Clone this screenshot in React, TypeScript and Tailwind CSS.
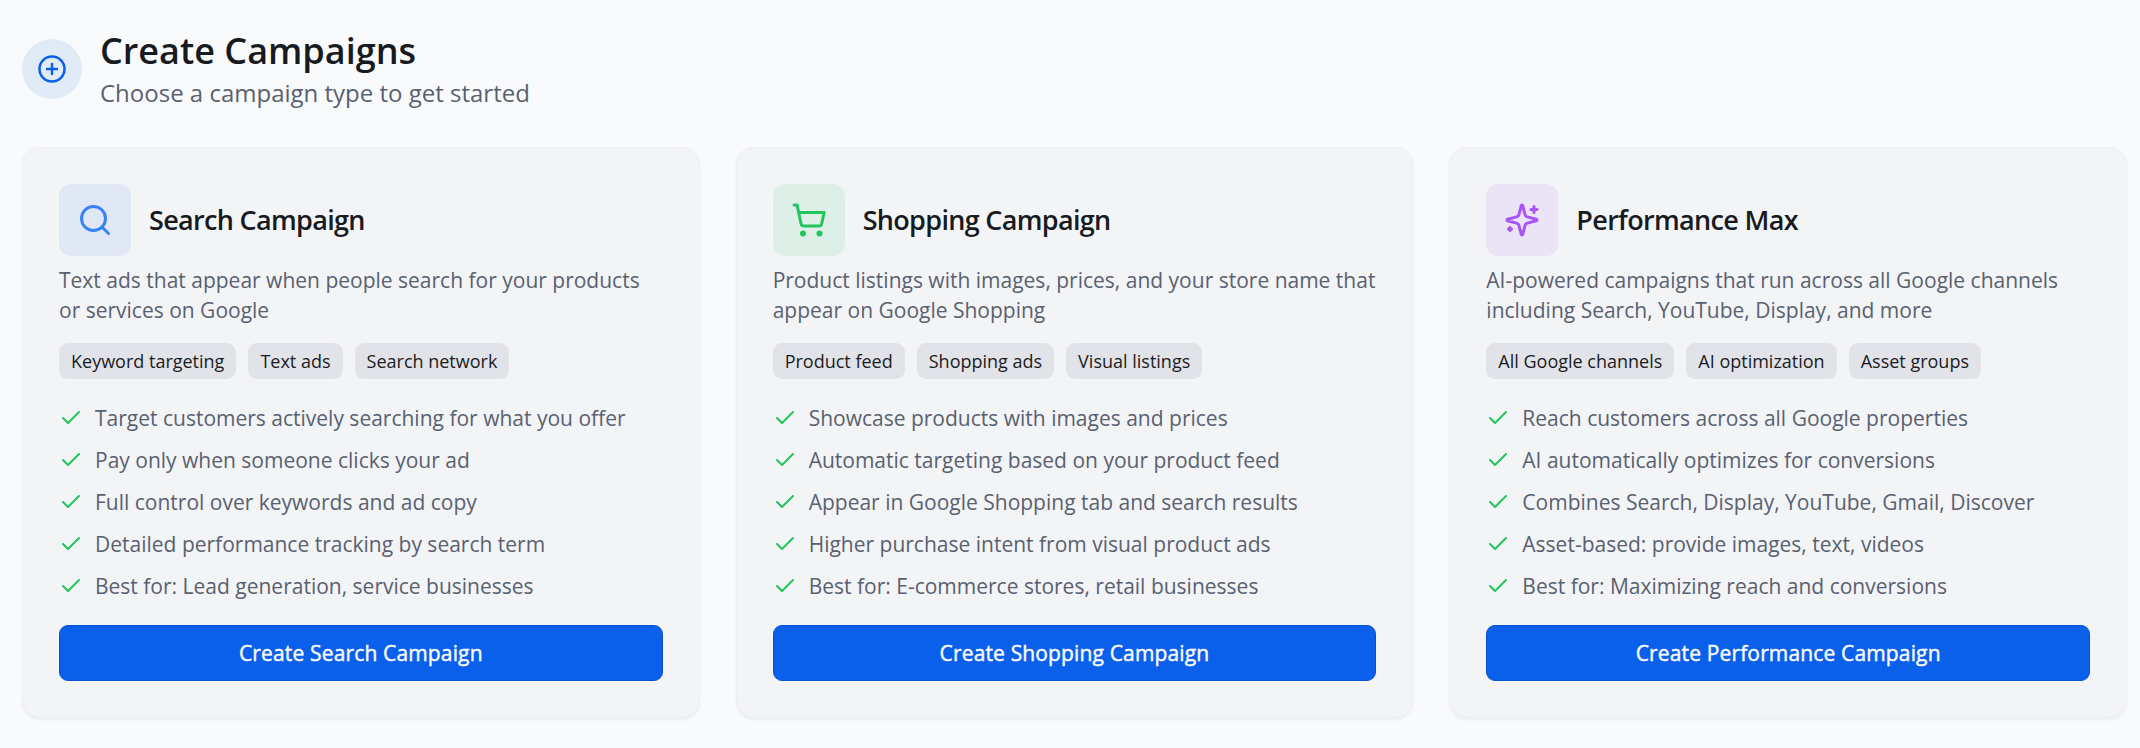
import React from "react";
import { Check, CirclePlus, Search, ShoppingCart } from "lucide-react";

type Campaign = {
  title: string;
  icon: React.ElementType;
  tile: string;
  description: string;
  tags: string[];
  benefits: string[];
  action: string;
};

function SparklesIcon({ className }: { className?: string }) {
  return (
    <svg
      className={className}
      viewBox="0 0 24 24"
      fill="none"
      stroke="currentColor"
      strokeWidth={2}
      strokeLinecap="round"
      strokeLinejoin="round"
    >
      <path d="M9.937 15.5A2 2 0 0 0 8.5 14.063l-6.135-1.582a.5.5 0 0 1 0-.962L8.5 9.936A2 2 0 0 0 9.937 8.5l1.582-6.135a.5.5 0 0 1 .963 0L14.063 8.5A2 2 0 0 0 15.5 9.937l6.135 1.581a.5.5 0 0 1 0 .964L15.5 14.063a2 2 0 0 0-1.437 1.437l-1.582 6.135a.5.5 0 0 1-.963 0z" />
      <path d="M20 3v4" />
      <path d="M22 5h-4" />
      <path d="M4 17v2" />
      <path d="M5 18H3" />
    </svg>
  );
}

const campaigns: Campaign[] = [
  {
    title: "Search Campaign",
    icon: Search,
    tile: "bg-[#e1e8f5] text-[#3b82f6]",
    description: "Text ads that appear when people search for your products or services on Google",
    tags: ["Keyword targeting", "Text ads", "Search network"],
    benefits: [
      "Target customers actively searching for what you offer",
      "Pay only when someone clicks your ad",
      "Full control over keywords and ad copy",
      "Detailed performance tracking by search term",
      "Best for: Lead generation, service businesses",
    ],
    action: "Create Search Campaign",
  },
  {
    title: "Shopping Campaign",
    icon: ShoppingCart,
    tile: "bg-[#22c55e]/10 text-[#22c55e]",
    description: "Product listings with images, prices, and your store name that appear on Google Shopping",
    tags: ["Product feed", "Shopping ads", "Visual listings"],
    benefits: [
      "Showcase products with images and prices",
      "Automatic targeting based on your product feed",
      "Appear in Google Shopping tab and search results",
      "Higher purchase intent from visual product ads",
      "Best for: E-commerce stores, retail businesses",
    ],
    action: "Create Shopping Campaign",
  },
  {
    title: "Performance Max",
    icon: SparklesIcon,
    tile: "bg-[#a855f7]/10 text-[#a855f7]",
    description: "AI-powered campaigns that run across all Google channels including Search, YouTube, Display, and more",
    tags: ["All Google channels", "AI optimization", "Asset groups"],
    benefits: [
      "Reach customers across all Google properties",
      "AI automatically optimizes for conversions",
      "Combines Search, Display, YouTube, Gmail, Discover",
      "Asset-based: provide images, text, videos",
      "Best for: Maximizing reach and conversions",
    ],
    action: "Create Performance Campaign",
  },
];

function CampaignCard({ title, icon: Icon, tile, description, tags, benefits, action }: Campaign) {
  return (
    <section className="flex flex-col rounded-[18px] border border-[#eeeff1] bg-[#f3f4f6] p-9 shadow-[0_1.5px_3px_rgba(0,0,0,0.05)]">
      <div className="flex items-center gap-[18px]">
        <div className={`flex size-[72px] items-center justify-center rounded-xl ${tile}`}>
          <Icon className="size-9" />
        </div>
        <h2 className="text-[27px] font-semibold leading-9 tracking-[-0.025em] text-[#171a21]">{title}</h2>
      </div>
      <p className="mt-[9px] text-[21px] leading-[30px] text-[#596170]">{description}</p>
      <div className="mt-[18px] flex gap-3">
        {tags.map((tag) => (
          <span key={tag} className="flex h-9 items-center rounded-[9px] bg-[#e2e3e9] px-3 text-[18px] leading-6 text-[#1a1c23]">
            {tag}
          </span>
        ))}
      </div>
      <ul className="mt-6 flex flex-col gap-3">
        {benefits.map((benefit) => (
          <li key={benefit} className="flex items-center gap-3 text-[21px] leading-[30px] text-[#596170]">
            <Check className="size-6 shrink-0 text-[#22c55e]" strokeWidth={2} />
            {benefit}
          </li>
        ))}
      </ul>
      <button className="mt-6 h-14 rounded-[9px] border border-[#0853cd] bg-[#0a60eb] text-[21px] font-normal leading-[30px] tracking-[0.15px] text-[#f9fafb] [-webkit-text-stroke:0.45px_#f9fafb]">
        {action}
      </button>
    </section>
  );
}

export default function App() {
  return (
    <main className="min-h-screen bg-[#f9fafc] pl-[22px] pr-[13px] pt-[27px] font-['Open_Sans',sans-serif]">
      <header className="flex items-center gap-[18px]">
        <div className="flex size-[60px] items-center justify-center rounded-full bg-[#e1ebf7] text-[#0a60eb]">
          <CirclePlus className="size-[30px]" strokeWidth={2} />
        </div>
        <div>
          <h1 className="text-[36px] font-semibold leading-[48px] text-[#171a21]">Create Campaigns</h1>
          <p className="text-[24px] leading-9 text-[#596170]">Choose a campaign type to get started</p>
        </div>
      </header>
      <div className="mt-9 grid grid-cols-3 gap-9">
        {campaigns.map((campaign) => (
          <CampaignCard key={campaign.title} {...campaign} />
        ))}
      </div>
    </main>
  );
}
